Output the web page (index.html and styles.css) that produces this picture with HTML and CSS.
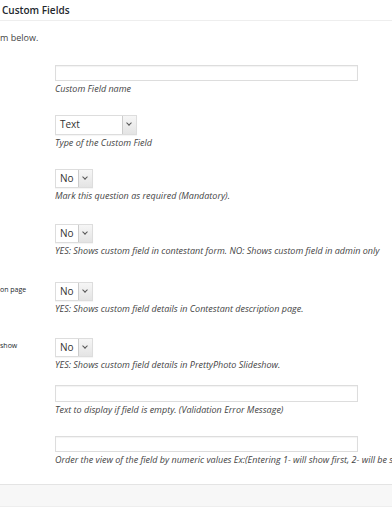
FILE: index.html
```html
<!doctype html>
<html>

<head>
    <meta charset="utf-8" />
    <meta name="viewport" content="width=device-width, initial-scale=1.0">
    <link rel="stylesheet" href="styles.css">
</head>

<body>

    <div class="main">

        <div class="box-title">Custom Fields</div>

        <p class="intro">m below.</p>

        <div class="form-table">

            <div class="row">
                <div class="label"></div>
                <div class="field">
                    <input type="text" class="text-input" />
                    <p class="desc">Custom Field name</p>
                </div>
            </div>

            <div class="row">
                <div class="label"></div>
                <div class="field">
                    <div class="select select-wide"><span class="value">Text</span><span class="arrow"></span></div>
                    <p class="desc">Type of the Custom Field</p>
                </div>
            </div>

            <div class="row">
                <div class="label"></div>
                <div class="field">
                    <div class="select"><span class="value">No</span><span class="arrow"></span></div>
                    <p class="desc">Mark this question as required (Mandatory).</p>
                </div>
            </div>

            <div class="row row-22">
                <div class="label"></div>
                <div class="field">
                    <div class="select"><span class="value">No</span><span class="arrow"></span></div>
                    <p class="desc">YES: Shows custom field in contestant form. NO: Shows custom field in admin only</p>
                </div>
            </div>

            <div class="row row-25">
                <div class="label">on page</div>
                <div class="field">
                    <div class="select"><span class="value">No</span><span class="arrow"></span></div>
                    <p class="desc">YES: Shows custom field details in Contestant description page.</p>
                </div>
            </div>

            <div class="row row-23">
                <div class="label">show</div>
                <div class="field">
                    <div class="select"><span class="value">No</span><span class="arrow"></span></div>
                    <p class="desc">YES: Shows custom field details in PrettyPhoto Slideshow.</p>
                </div>
            </div>

            <div class="row row-14">
                <div class="label"></div>
                <div class="field">
                    <input type="text" class="text-input text-input-tall" />
                    <p class="desc">Text to display if field is empty. (Validation Error Message)</p>
                </div>
            </div>

            <div class="row">
                <div class="label"></div>
                <div class="field">
                    <input type="text" class="text-input" />
                    <p class="desc">Order the view of the field by numeric values Ex:(Entering 1- will show first, 2- will be shown second)</p>
                </div>
            </div>

        </div>

        <div class="footer-bar"></div>

    </div>

</body>

</html>
```

FILE: styles.css
```css
html,
body {
    margin: 0 0;
    height: 100%;
    font-family: "Open Sans", Arial, Helvetica, sans-serif;
    background-color: white;
    overflow: hidden;
}

.main {
    margin: 0 0;
    height: 100%;
}

.main .box-title {
    height: 20px;
    line-height: 21px;
    padding-left: 2px;
    font-size: 10px;
    font-weight: 600;
    color: #23282d;
    border-bottom: 1px solid #eee;
}

.main .intro {
    margin: 0 0;
    padding-top: 9px;
    height: 15px;
    line-height: 15px;
    font-size: 9px;
    color: #444;
}

.main .form-table {
    display: flex;
    flex-direction: column;
}

.main .form-table .row {
    display: flex;
    flex-direction: row;
    padding-top: 20px;
}

.main .form-table .row-22 {
    padding-top: 22px;
}

.main .form-table .row-25 {
    padding-top: 25px;
}

.main .form-table .row-23 {
    padding-top: 23px;
}

.main .form-table .row-14 {
    padding-top: 14px;
}

.main .form-table .label {
    width: 55px;
    flex-shrink: 0;
    padding-top: 3px;
    font-size: 7px;
    line-height: 10px;
    color: #23282d;
    white-space: nowrap;
}

.main .form-table .field {
    flex-grow: 1;
    min-width: 0;
    overflow: hidden;
    white-space: nowrap;
}

.main .form-table .text-input {
    display: block;
    box-sizing: border-box;
    width: 303px;
    height: 16px;
    margin: 0 0;
    padding: 0 3px;
    border: 1px solid #ddd;
    box-shadow: inset 0 1px 1px rgba(0, 0, 0, 0.05);
    background-color: white;
    outline: none;
}

.main .form-table .text-input-tall {
    height: 17px;
}

.main .form-table .select {
    display: flex;
    flex-direction: row;
    box-sizing: border-box;
    width: 38px;
    height: 19px;
    border: 1px solid #ddd;
    background-color: white;
    box-shadow: 0 1px 1px rgba(0, 0, 0, 0.04);
}

.main .form-table .select-wide {
    width: 82px;
    height: 20px;
}

.main .form-table .select .value {
    flex-grow: 1;
    padding-left: 4px;
    font-size: 10px;
    line-height: 17px;
    color: #333;
}

.main .form-table .select .arrow {
    position: relative;
    width: 13px;
    border-left: 1px solid #ccc;
    background: linear-gradient(#f6f6f6, #e4e4e4);
}

.main .form-table .select .arrow:after {
    content: '';
    position: absolute;
    left: 4px;
    top: 5px;
    width: 3px;
    height: 3px;
    border-right: 1px solid #555;
    border-bottom: 1px solid #555;
    transform: rotate(45deg);
}

.main .form-table .desc {
    margin: 2px 0 0 0;
    height: 12px;
    line-height: 12px;
    font-size: 9px;
    font-style: italic;
    color: #444;
}

.main .footer-bar {
    margin-top: 18px;
    height: 21px;
    background-color: #f7f7f7;
    border-top: 1px solid #e4e4e4;
    border-bottom: 1px solid #eee;
}
```
